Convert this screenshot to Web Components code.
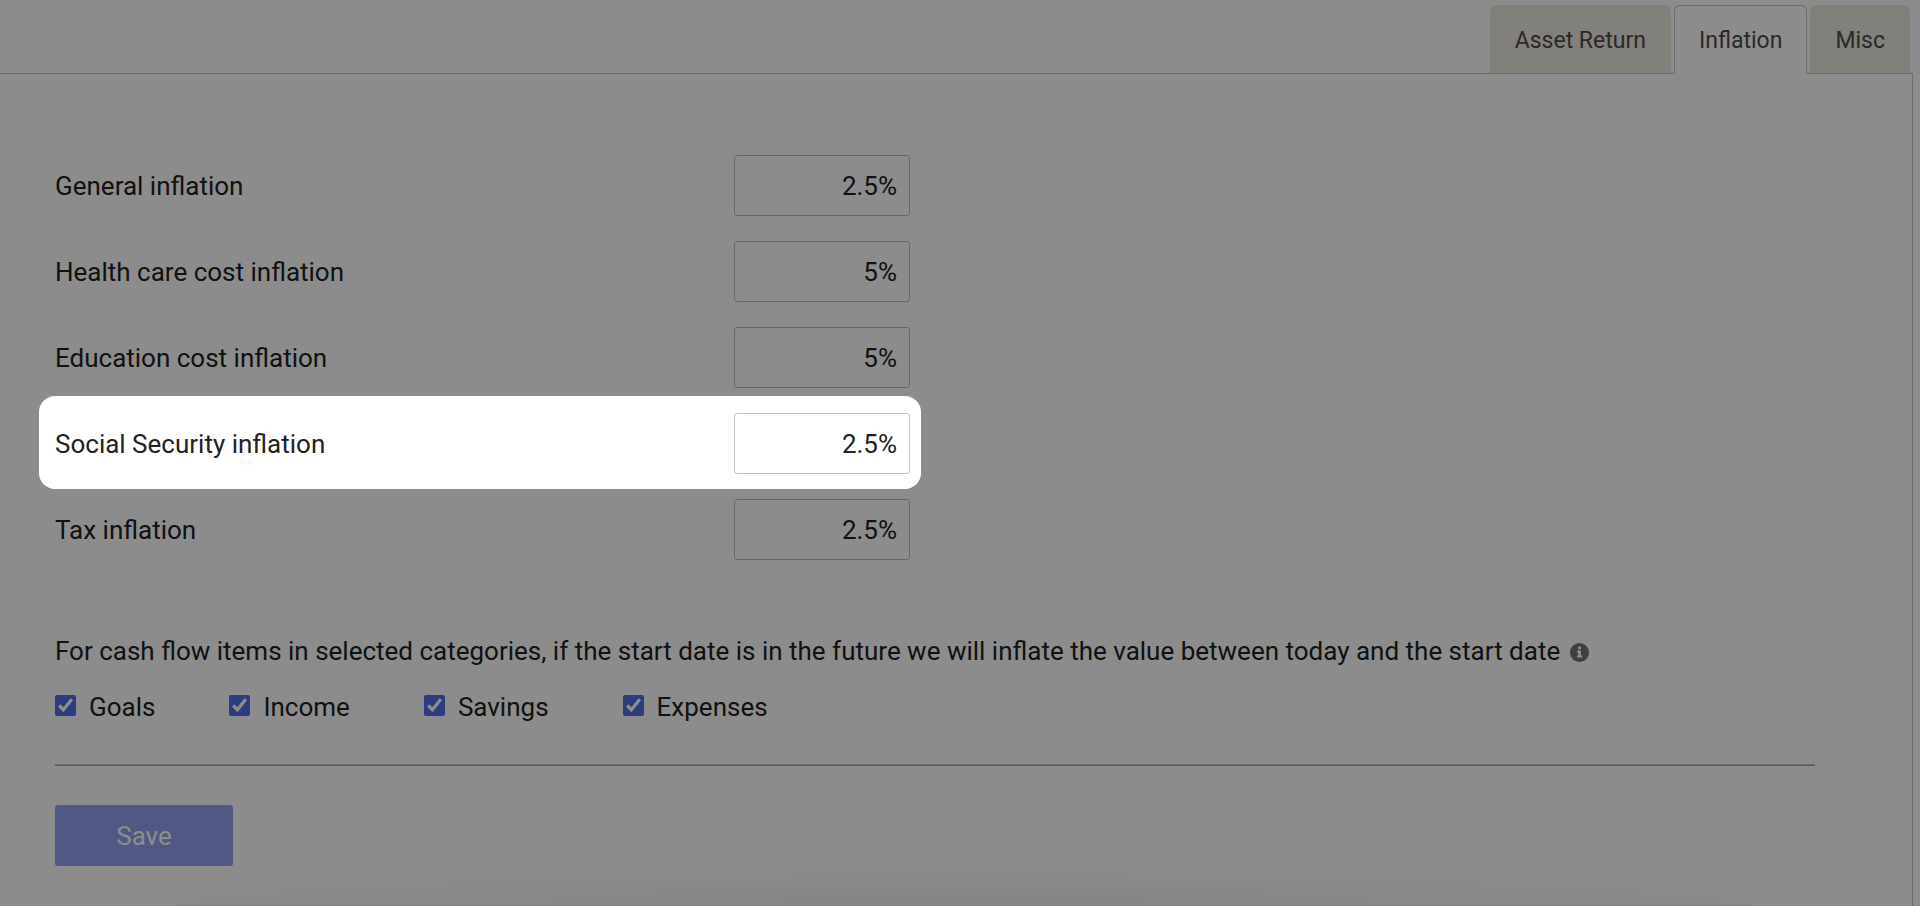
<!DOCTYPE html>
<html lang="en">
<head>
<meta charset="utf-8">
<title>Inflation settings</title>
<style>
  html { height: 100%; }
  body {
    margin: 0;
    min-height: 100%;
    background: #fff;
    color: #222;
    font: 26px/32px Roboto, "Liberation Sans", sans-serif;
  }
</style>
</head>
<body>
<settings-page>
  <settings-tab slot="tab">Asset Return</settings-tab>
  <settings-tab slot="tab" active>Inflation</settings-tab>
  <settings-tab slot="tab">Misc</settings-tab>

  <rate-field value="2.5%">General inflation</rate-field>
  <rate-field value="5%">Health care cost inflation</rate-field>
  <rate-field value="5%">Education cost inflation</rate-field>
  <rate-field value="2.5%" spotlight>Social Security inflation</rate-field>
  <rate-field value="2.5%">Tax inflation</rate-field>

  <category-group slot="categories">
    <span slot="legend">For cash flow items in selected categories, if the start date is in the future we will inflate the value between today and the start date</span>
    <category-check>Goals</category-check>
    <category-check>Income</category-check>
    <category-check>Savings</category-check>
    <category-check>Expenses</category-check>
  </category-group>

  <save-button slot="actions">Save</save-button>
</settings-page>

<script>
  const define = (name, html, setup) => {
    const template = document.createElement('template');
    template.innerHTML = html;
    customElements.define(name, class extends HTMLElement {
      constructor() {
        super();
        this.attachShadow({ mode: 'open' }).append(template.content.cloneNode(true));
      }
      connectedCallback() {
        if (setup) setup(this, this.shadowRoot);
      }
    });
  };

  define('settings-page', `
    <style>
      :host { display: flex; flex-direction: column; min-height: 100vh; overflow: hidden; position: relative; }
      nav { display: flex; justify-content: flex-end; gap: 3px; padding: 5px 10px 0 0; }
      main {
        flex: 1;
        margin-right: 7px;
        padding: 81px 97px 40px 55px;
        border: solid #cfc5b9;
        border-width: 1px 1px 0 0;
      }
      .rates { display: grid; gap: 25px; justify-items: start; }
      .categories { margin-top: 75px; }
      hr { height: 2px; margin: 41px 0 39px; border: 0; background: linear-gradient(#c4c4c4 50%, #ababab 50%); }
      /* soft shade along the lower edge of the window */
      .shade {
        position: absolute; inset: auto 0 0; height: 40px; pointer-events: none;
        background: radial-gradient(50% 100% at 50% 100%, rgba(0,0,0,.06), transparent);
      }
    </style>
    <nav aria-label="Settings"><slot name="tab"></slot></nav>
    <main>
      <div class="rates"><slot></slot></div>
      <div class="categories"><slot name="categories"></slot></div>
      <hr>
      <slot name="actions"></slot>
    </main>
    <div class="shade"></div>
  `);

  define('settings-tab', `
    <style>
      :host { display: block; font-size: 23px; line-height: 28px; }
      a {
        display: block;
        padding: 22px 25px 18px;
        border-radius: 6px 6px 0 0;
        background: #ece9de;
        color: #504c4e;
        text-decoration: none;
      }
      :host([active]) { margin-bottom: -1px; z-index: 1; }
      :host([active]) a { padding: 21px 24px 19px; border: 1px solid #c8c6c4; border-bottom: 0; background: #fff; }
    </style>
    <a href="#"><slot></slot></a>
  `, (host, root) => {
    if (host.hasAttribute('active')) root.querySelector('a').setAttribute('aria-current', 'page');
  });

  define('rate-field', `
    <style>
      :host { display: block; position: relative; }
      label { display: grid; grid-template-columns: 679px 176px; align-items: center; }
      input {
        box-sizing: border-box; width: 100%; height: 61px; margin: 0; padding: 0 12px;
        border: 1px solid #c0c0c0; border-radius: 3px;
        background: #fff; color: inherit; font: inherit; text-align: right;
      }
      /* cut-out that dims everything around the highlighted field */
      :host([spotlight])::after {
        content: ""; position: absolute; z-index: 2; inset: -17px -11px -15px -16px;
        border-radius: 16px; box-shadow: 0 0 0 4000px rgba(0,0,0,.45); pointer-events: none;
      }
    </style>
    <label><span><slot></slot></span><input type="text"></label>
  `, (host, root) => {
    root.querySelector('input').value = host.getAttribute('value');
  });

  define('category-group', `
    <style>
      :host { display: block; }
      fieldset { margin: 0; padding: 0; border: 0; min-width: 0; }
      legend { padding: 0; }
      svg { width: 19px; height: 19px; margin-left: 3px; vertical-align: -2px; }
      .options { display: flex; flex-wrap: wrap; gap: 16px 74px; margin-top: 24px; }
    </style>
    <fieldset>
      <legend><slot name="legend"></slot>
        <svg viewBox="0 0 19 19" role="img" aria-label="More information">
          <circle cx="9.5" cy="9.5" r="9.5" fill="#757272"/>
          <path fill="#fff" d="M8 3.6h3v2.6H8zM7 7.6h4v5h1.2v2H7v-2h1.2v-3H7z"/>
        </svg>
      </legend>
      <div class="options"><slot></slot></div>
    </fieldset>
  `);

  define('category-check', `
    <style>
      :host { display: block; }
      label { display: flex; align-items: center; gap: 13px; }
      input { width: 21px; height: 21px; margin: 0 0 4px; accent-color: #4f6fe6; }
    </style>
    <label><input type="checkbox" checked><span><slot></slot></span></label>
  `);

  define('save-button', `
    <style>
      :host { display: block; }
      button {
        display: block; min-width: 178px; height: 61px; padding: 0 24px;
        border: 0; border-radius: 3px; background: #91a2ee; color: #fff; font: inherit;
      }
    </style>
    <button type="button"><slot></slot></button>
  `);
</script>
</body>
</html>
